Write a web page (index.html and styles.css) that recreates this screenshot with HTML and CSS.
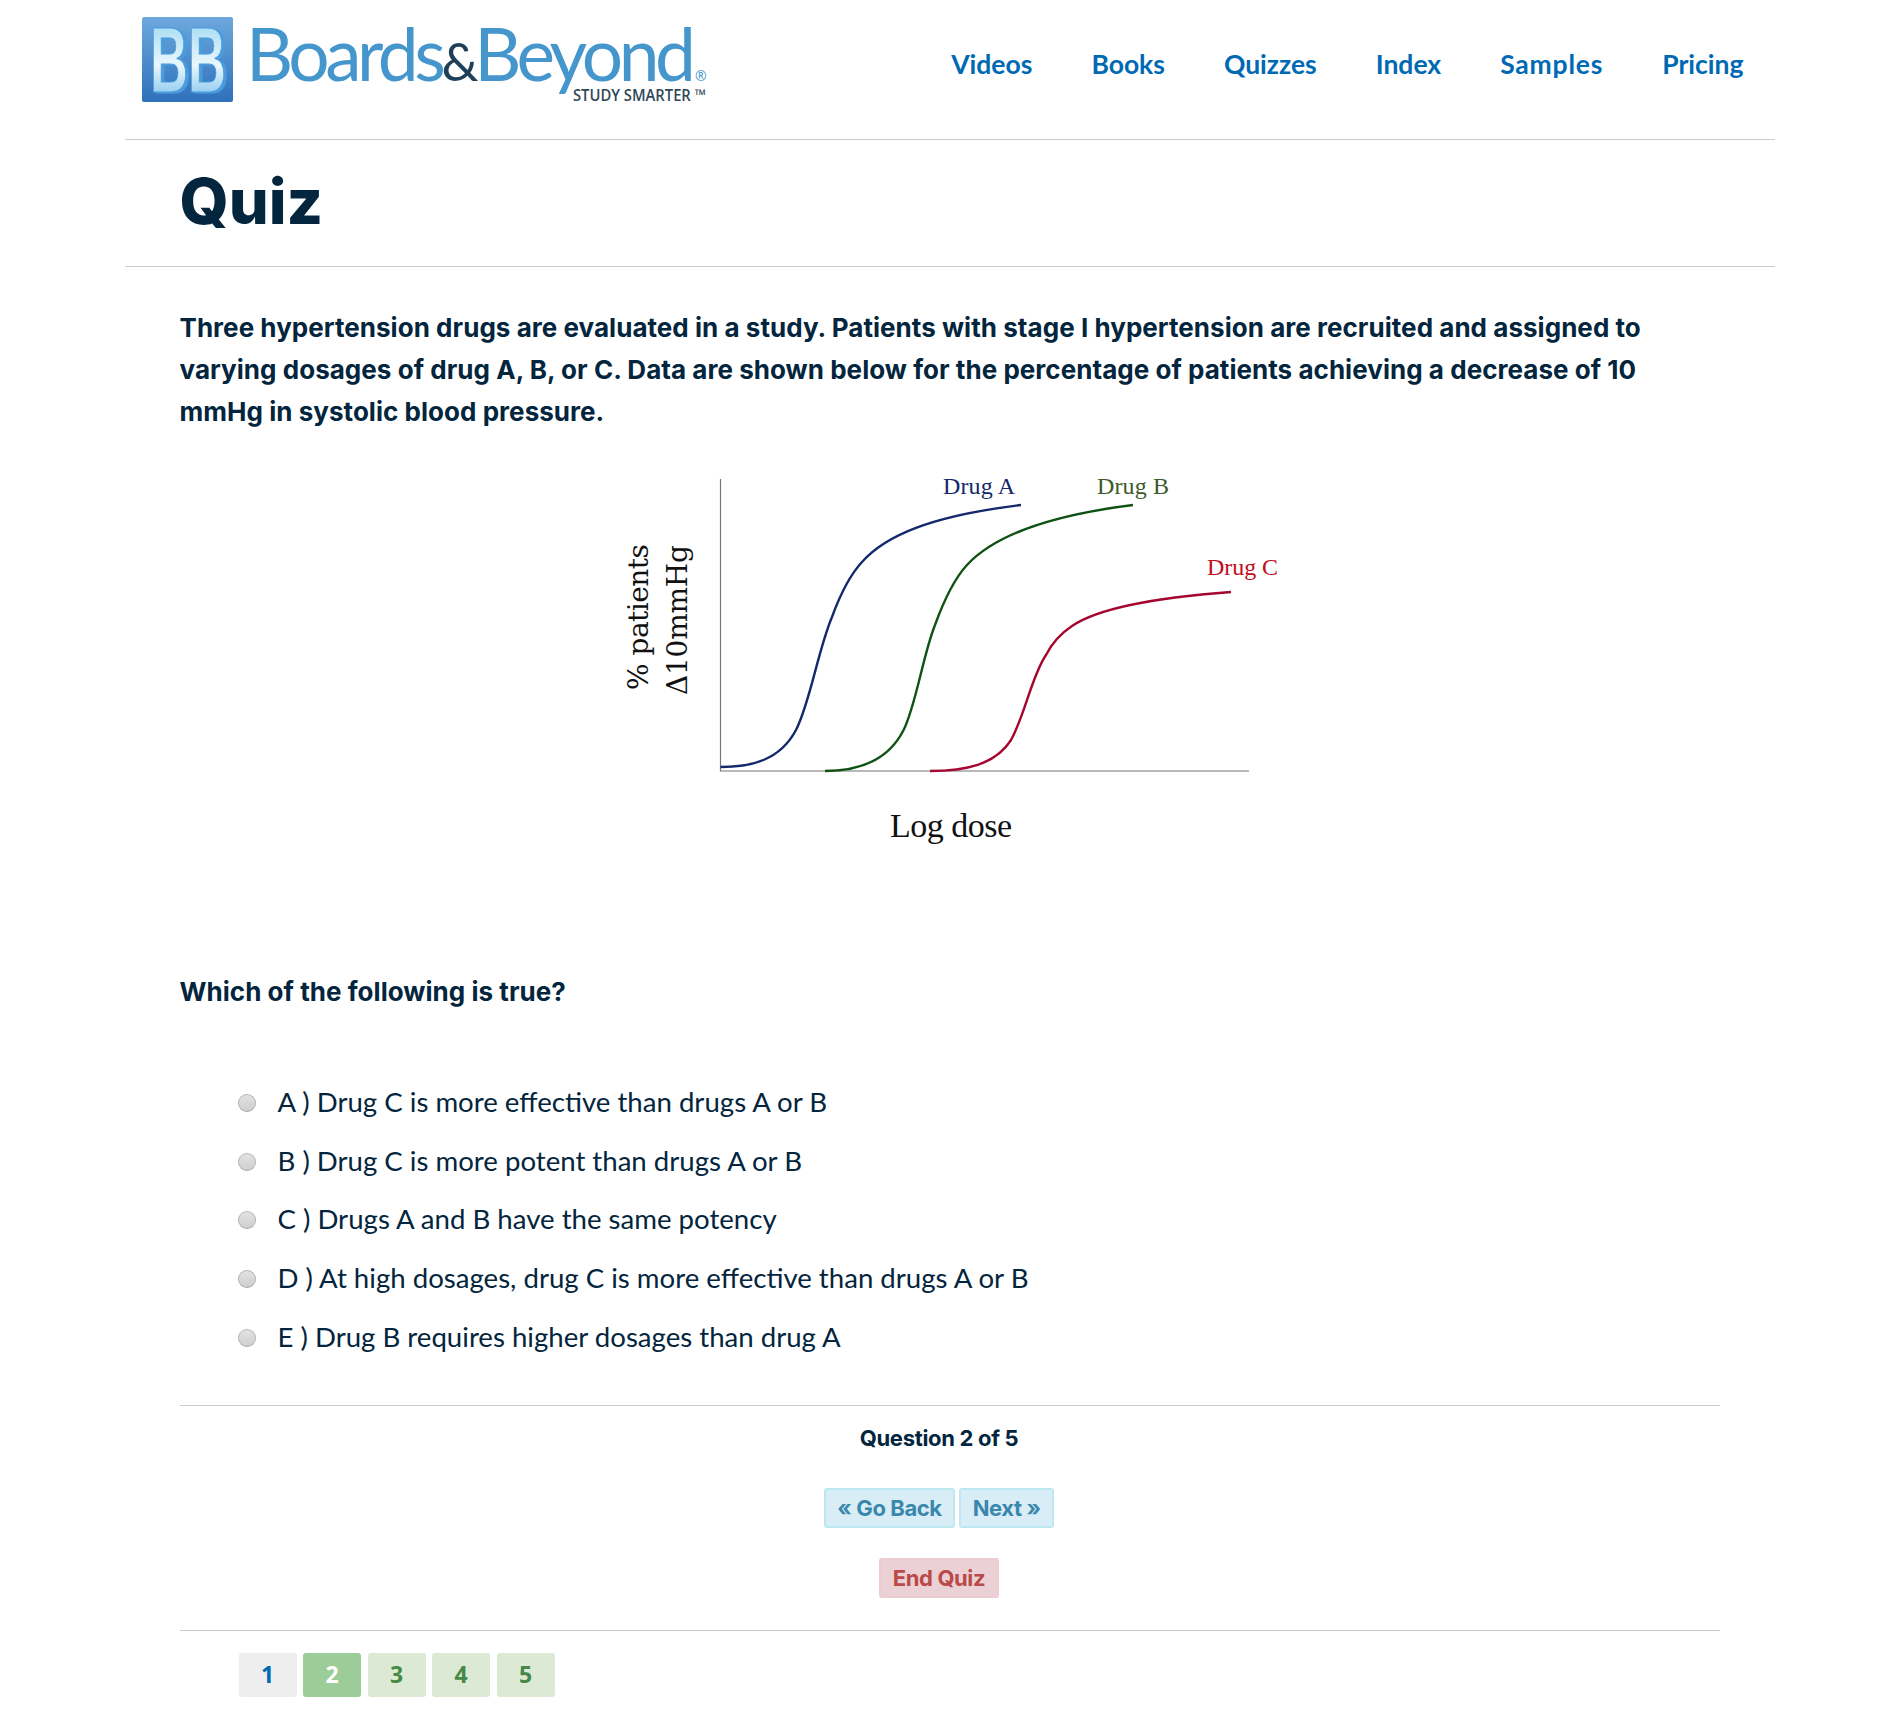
FILE: index.html
```html
<!DOCTYPE html>
<html lang="en">
<head>
    <meta charset="UTF-8">
    <title>Quiz - Boards &amp; Beyond</title>
    <link rel="stylesheet" href="styles.css">
</head>
<body>
    <div class="page">
        <header class="site-header">
            <a class="logo" href="#">
                <svg width="570" height="88" viewBox="0 0 570 88">
                    <defs>
                        <linearGradient id="tile" x1="0" y1="0" x2="0" y2="1">
                            <stop offset="0" stop-color="#6da9dd"/>
                            <stop offset="1" stop-color="#2f70bb"/>
                        </linearGradient>
                        <linearGradient id="letters" x1="0" y1="0" x2="0" y2="1">
                            <stop offset="0" stop-color="#8fd2ef"/>
                            <stop offset="0.55" stop-color="#eaf7fd"/>
                            <stop offset="1" stop-color="#5fb4e6"/>
                        </linearGradient>
                    </defs>
                    <rect x="0" y="0" width="91" height="85" rx="2" fill="url(#tile)"/>
                    <text class="logo-bb" x="8" y="75" textLength="76" lengthAdjust="spacingAndGlyphs" fill="url(#letters)" stroke="#4a9cdc" stroke-width="1">BB</text>
                    <text class="logo-word" x="104" y="64" textLength="450" lengthAdjust="spacing" fill="#4596cc">Boards<tspan class="logo-amp" fill="#1f3f58">&amp;</tspan>Beyond</text>
                    <text class="logo-reg" x="553" y="64" fill="#4596cc">®</text>
                    <text class="logo-tag" x="431" y="84" textLength="133" lengthAdjust="spacingAndGlyphs" fill="#2f4858">STUDY SMARTER ™</text>
                </svg>
            </a>
            <nav class="site-nav">
                <a href="#">Videos</a>
                <a href="#">Books</a>
                <a href="#">Quizzes</a>
                <a href="#">Index</a>
                <a class="nav-wide" href="#">Samples</a>
                <a href="#">Pricing</a>
            </nav>
        </header>

        <div class="title-bar">
            <h1>Quiz</h1>
        </div>

        <main class="quiz">
            <p class="stem">Three hypertension drugs are evaluated in a study. Patients with stage I hypertension are recruited and assigned to varying dosages of drug A, B, or C. Data are shown below for the percentage of patients achieving a decrease of 10 mmHg in systolic blood pressure.</p>

            <svg class="chart" width="700" height="400" viewBox="0 0 700 400">
                <path d="M120.5 19V311H649" fill="none" stroke="#77777b" stroke-width="1.2"/>
                <path d="M120.5 307C152 307 180 300 196 270C210 243 218 190 232 157C240 135 250 115 262 102C285 76 330 56 421 45" fill="none" stroke="#14296b" stroke-width="2.4"/>
                <path d="M225 311C255 311 287 303 303.6 270C316 245 323 195 335 165C343 143 354 119 367 105C392 78 445 56 533 45" fill="none" stroke="#0f5214" stroke-width="2.4"/>
                <path d="M330 311C365 311 395 305 411 280C425 255 432 215 446 195C452 183 460 174 472 166C497 149 550 138 631 132" fill="none" stroke="#a5062f" stroke-width="2.4"/>
                <text class="chart-small" x="343" y="34" textLength="72" fill="#14296b">Drug A</text>
                <text class="chart-small" x="497" y="34" textLength="72" fill="#3d5a2a">Drug B</text>
                <text class="chart-small" x="607" y="115" textLength="71" fill="#c00d1e">Drug C</text>
                <text class="chart-big" x="290" y="377" textLength="122" fill="#111">Log dose</text>
                <text class="chart-axis" transform="translate(48 230) rotate(-90)" textLength="146" fill="#111">% patients</text>
                <text class="chart-axis" transform="translate(87 235) rotate(-90)" textLength="150" fill="#111">Δ10mmHg</text>
            </svg>

            <p class="prompt">Which of the following is true?</p>

            <ul class="answers">
                <li><input type="radio" name="answer"><span>A ) Drug C is more effective than drugs A or B</span></li>
                <li><input type="radio" name="answer"><span>B ) Drug C is more potent than drugs A or B</span></li>
                <li><input type="radio" name="answer"><span>C ) Drugs A and B have the same potency</span></li>
                <li><input type="radio" name="answer"><span>D ) At high dosages, drug C is more effective than drugs A or B</span></li>
                <li><input type="radio" name="answer"><span>E ) Drug B requires higher dosages than drug A</span></li>
            </ul>

            <div class="controls">
                <div class="progress">Question 2 of 5</div>
                <div class="btn-row">
                    <a class="btn btn-info" href="#">« Go Back</a>
                    <a class="btn btn-info" href="#">Next »</a>
                </div>
                <div class="btn-row">
                    <a class="btn btn-danger" href="#">End Quiz</a>
                </div>
            </div>

            <div class="pager">
                <a class="page-num current" href="#">1</a>
                <a class="page-num active" href="#">2</a>
                <a class="page-num" href="#">3</a>
                <a class="page-num" href="#">4</a>
                <a class="page-num" href="#">5</a>
            </div>
        </main>
    </div>
</body>
</html>
```

FILE: styles.css
```css
body {
    margin: 0;
    background: #fff;
    color: #03253d;
    font-family: Inter, "Liberation Sans", sans-serif;
}
a {
    text-decoration: none;
}
.page {
    width: 1650px;
    margin: 0 auto;
}
.site-header {
    display: flex;
    justify-content: space-between;
    height: 140px;
    padding: 17px 31px 0 17px;
    box-sizing: border-box;
    border-bottom: 1px solid #ccc;
}
.logo-bb {
    font-family: "Liberation Sans", sans-serif;
    font-weight: bold;
    font-size: 92px;
    filter: drop-shadow(3px 1px 0 #4a9cdc);
}
.logo-word {
    font-family: Lato, sans-serif;
    font-weight: 400;
    font-size: 73px;
}
.logo-amp {
    font-size: 52px;
}
.logo-reg {
    font-family: "Open Sans", sans-serif;
    font-size: 14px;
}
.logo-tag {
    font-family: "Open Sans", sans-serif;
    font-size: 16px;
    font-weight: 600;
}
.site-nav {
    display: flex;
    gap: 59px;
    padding-top: 32px;
}
.site-nav a {
    color: #0069b4;
    font-family: Lato, sans-serif;
    font-weight: 700;
    font-size: 26.5px;
    line-height: 30px;
}
.site-nav .nav-wide {
    letter-spacing: 0.8px;
}
.title-bar {
    height: 126px;
    padding-left: 55px;
    border-bottom: 1px solid #ccc;
}
h1 {
    margin: 0;
    padding-top: 23px;
    font-size: 63px;
    line-height: 76px;
    font-weight: 800;
    color: #03253d;
}
.quiz {
    padding: 40px 55px 0;
}
.stem {
    margin: 0;
    padding-right: 30px;
    font-size: 26px;
    line-height: 42px;
    font-weight: 700;
    letter-spacing: 0.04px;
}
.chart {
    display: block;
    margin: 27px auto 0;
}
.chart text {
    font-family: "Liberation Serif", serif;
}
.chart .chart-small {
    font-size: 24px;
}
.chart .chart-big {
    font-size: 34px;
}
.chart .chart-axis {
    font-family: "DejaVu Serif", serif;
    font-size: 28px;
}
.prompt {
    margin: 111px 0 0;
    font-size: 26px;
    line-height: 42px;
    font-weight: 700;
    letter-spacing: 0.04px;
}
.answers {
    list-style: none;
    margin: 59.5px 0 0;
    padding: 0 0 0 58px;
}
.answers li {
    display: flex;
    align-items: center;
    gap: 22px;
    height: 58.6px;
    font-family: Lato, sans-serif;
    font-size: 27.6px;
}
.answers input {
    appearance: none;
    width: 18px;
    height: 18px;
    margin: 3px 0 0;
    border: 1px solid #b5b5b5;
    border-bottom-color: #a5a5a5;
    border-radius: 50%;
    background: linear-gradient(#e2e2e2, #cfcfcf);
}
.controls {
    margin-top: 40px;
    padding-top: 14px;
    padding-right: 21px;
    padding-bottom: 32px;
    border-top: 1px solid #ccc;
    border-bottom: 1px solid #ccc;
    text-align: center;
}
.progress {
    font-size: 22px;
    line-height: 36px;
    font-weight: 700;
    letter-spacing: -0.3px;
}
.btn-row {
    display: flex;
    justify-content: center;
    gap: 4px;
    margin-top: 30px;
}
.progress + .btn-row {
    margin-top: 32px;
}
.btn {
    box-sizing: border-box;
    height: 40px;
    padding: 0 11.5px;
    border: 2px solid;
    border-radius: 3px;
    font-size: 22px;
    line-height: 36px;
    font-weight: 700;
    letter-spacing: -0.4px;
}
.btn-info {
    background: #d9edf7;
    border-color: #bce8f1;
    color: #3a87ad;
}
.btn-danger {
    background: #ebd0d5;
    border-color: #ebccd1;
    color: #b94a48;
}
.pager {
    display: flex;
    gap: 6.5px;
    margin-top: 22px;
    padding-left: 59px;
}
.page-num {
    width: 58px;
    height: 44px;
    border-radius: 3px;
    background: #dce9d5;
    color: #468847;
    font-family: "Open Sans", sans-serif;
    font-size: 23px;
    font-weight: 700;
    line-height: 43px;
    text-align: center;
}
.page-num.current {
    background: #eee;
    color: #0069b4;
}
.page-num.active {
    background: #9ccc98;
    color: #fff;
}
```
